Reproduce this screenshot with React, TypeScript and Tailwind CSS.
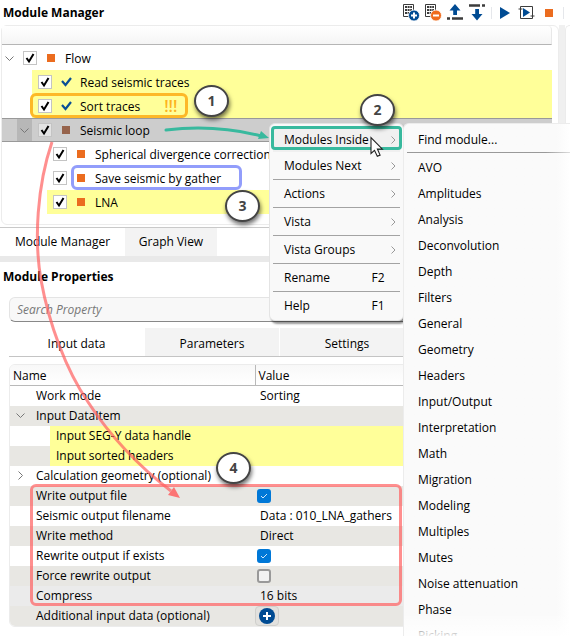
import { useState } from "react";

type TreeNode = {
  label: string;
  depth: number;
  status: "idle" | "done" | "dimmed";
  expandable?: boolean;
  highlight?: boolean;
  selected?: boolean;
  warn?: boolean;
  frame?: string;
};

const nodes: TreeNode[] = [
  { label: "Flow", depth: 0, status: "idle", expandable: true },
  { label: "Read seismic traces", depth: 1, status: "done", highlight: true },
  {
    label: "Sort traces",
    depth: 1,
    status: "done",
    highlight: true,
    warn: true,
    frame: "-left-0.5 w-[158px] border-[#fdb827]",
  },
  { label: "Seismic loop", depth: 1, status: "dimmed", expandable: true, selected: true },
  { label: "Spherical divergence correction", depth: 2, status: "idle" },
  {
    label: "Save seismic by gather",
    depth: 2,
    status: "idle",
    frame: "left-6 w-[171px] border-[#929dfb]",
  },
  { label: "LNA", depth: 2, status: "idle", highlight: true },
];

type Property = {
  name: string;
  value?: string;
  checked?: boolean;
  add?: boolean;
  toggle?: "open" | "closed";
  child?: boolean;
  shade: string;
};

const properties: Property[] = [
  { name: "Work mode", value: "Sorting", shade: "bg-white" },
  { name: "Input DataItem", toggle: "open", shade: "bg-[#e8e7e3]" },
  { name: "Input SEG-Y data handle", child: true, shade: "bg-white" },
  { name: "Input sorted headers", child: true, shade: "bg-[#e8e7e3]" },
  { name: "Calculation geometry (optional)", toggle: "closed", shade: "bg-white" },
  { name: "Write output file", checked: true, shade: "bg-[#e8e7e3]" },
  { name: "Seismic output filename", value: "Data : 010_LNA_gathers", shade: "bg-white" },
  { name: "Write method", value: "Direct", shade: "bg-[#e8e7e3]" },
  { name: "Rewrite output if exists", checked: true, shade: "bg-white" },
  { name: "Force rewrite output", checked: false, shade: "bg-[#e8e7e3]" },
  { name: "Compress", value: "16 bits", shade: "bg-[#ebebeb]" },
  { name: "Additional input data (optional)", add: true, shade: "bg-[#e8e7e3]" },
];

const menuGroups = [
  [
    { label: "Modules Inside", sub: true, active: true },
    { label: "Modules Next", sub: true },
  ],
  [{ label: "Actions", sub: true }],
  [{ label: "Vista", sub: true }],
  [{ label: "Vista Groups", sub: true }],
  [{ label: "Rename", keys: "F2" }],
  [{ label: "Help", keys: "F1" }],
] as { label: string; sub?: boolean; active?: boolean; keys?: string }[][];

const moduleCategories = [
  "AVO",
  "Amplitudes",
  "Analysis",
  "Deconvolution",
  "Depth",
  "Filters",
  "General",
  "Geometry",
  "Headers",
  "Input/Output",
  "Interpretation",
  "Math",
  "Migration",
  "Modeling",
  "Multiples",
  "Mutes",
  "Noise attenuation",
  "Phase",
  "Picking",
];

function GridIcon() {
  return (
    <g fill="none" stroke="#3c3c3c">
      <path d="M.5.5h10v12H.5z" />
      <path d="M2 3h7M2 6h7M2 9h7" strokeWidth="2" strokeDasharray="2 .600" />
    </g>
  );
}

function Chevron({ open }: { open?: boolean }) {
  return (
    <svg width="9" height="9" viewBox="0 0 9 9" fill="none" stroke="#777">
      <path d={open ? "M.5 2.5l4 4 4-4" : "M2.5.5l4 4-4 4"} />
    </svg>
  );
}

function Toolbar() {
  return (
    <div className="flex h-[22px] items-center">
      <button aria-label="Add module" className="mr-[5px]">
        <svg width="17" height="17" viewBox="0 0 17 17">
          <GridIcon />
          <circle cx="11" cy="11.500" r="5.500" fill="#004b93" stroke="#fff" strokeWidth=".8" />
          <path d="M8 11.500h6M11 8.500v6" stroke="#fff" strokeWidth="2" />
        </svg>
      </button>
      <button aria-label="Remove module" className="mr-[5px]">
        <svg width="17" height="17" viewBox="0 0 17 17">
          <GridIcon />
          <circle cx="11" cy="11.500" r="5.500" fill="#f06c1e" stroke="#fff" strokeWidth=".8" />
          <path d="M8 11.500h6" stroke="#fff" strokeWidth="2" />
        </svg>
      </button>
      <button aria-label="Move up" className="mr-[5px]">
        <svg width="17" height="17" viewBox="0 0 17 17">
          <path d="M8 0l5.500 6.500h-3.500v4.500H6.200V6.500H2.500z" fill="#004b93" />
          <path d="M0 14.500h3M5 14.500h11" stroke="#3c3c3c" strokeWidth="2.600" />
        </svg>
      </button>
      <button aria-label="Move down" className="mr-[5px]">
        <svg width="17" height="17" viewBox="0 0 17 17">
          <path d="M0 1.500h11M13 1.500h3" stroke="#3c3c3c" strokeWidth="2.600" />
          <path d="M8 16.500l5.500-6.500H10V5H6.200v5H2.500z" fill="#004b93" />
        </svg>
      </button>
      <span className="h-3 w-px bg-gray-200" />
      <button aria-label="Run" className="mx-2">
        <svg width="10" height="12" viewBox="0 0 10 12">
          <path d="M0 0l10 6-10 6z" fill="#004b93" />
        </svg>
      </button>
      <button aria-label="Run in loop" className="mr-2">
        <svg width="17" height="17" viewBox="0 0 17 17" fill="none" stroke="#3c3c3c">
          <path d="M2.500 12V2.500h12V11M2.500 5v9.500h12V6M.5 5h4M2.500 3v4M12.500 12h4M14.500 10v4" />
          <path d="M5 4l7 4.500L5 13z" fill="#004b93" stroke="none" />
        </svg>
      </button>
      <button aria-label="Stop" className="ml-0.5 h-2 w-2 bg-[#eb6c1f]" />
      <span className="ml-2.5 mr-1.5 h-3 w-px bg-gray-200" />
    </div>
  );
}

function TreeRow({ node }: { node: TreeNode }) {
  const [checked, setChecked] = useState(true);
  const square = node.status === "dimmed" ? "bg-[#96634b]" : "bg-[#eb6c1f]";
  return (
    <li
      className={`flex h-6 ${
        node.selected ? "bg-[#cdcdcd] border-y border-[#999]" : ""
      } ${node.depth === 0 ? "pl-0" : node.depth === 1 ? "pl-[15px]" : "pl-[30px]"}`}
    >
      <span
        className={`flex w-[15px] items-center justify-center ${
          node.selected ? "bg-[#b7b7b7]" : ""
        }`}
      >
        {node.expandable && <Chevron open />}
      </span>
      <div
        className={`relative flex flex-1 items-center pl-1.5 ${
          node.highlight ? "bg-[#ffff99]" : ""
        }`}
      >
        <label className="flex items-center gap-2">
          <span className="grid">
            <input
              type="checkbox"
              checked={checked}
              onChange={() => setChecked(!checked)}
              className={`col-start-1 row-start-1 h-3.5 w-3.5 appearance-none border border-[#c4c4c4] ${
                node.selected ? "bg-[#e3e3e3]" : "bg-white"
              }`}
            />
            {checked && (
              <svg
                className="pointer-events-none col-start-1 row-start-1"
                width="14"
                height="14"
                viewBox="0 0 14 14"
              >
                <path d="M3.500 7l2.500 3.500L10.500 3" fill="none" stroke="#000" strokeWidth="2" />
              </svg>
            )}
          </span>
          <span className="flex w-3 justify-center">
            {node.status === "done" ? (
              <svg width="11" height="10" viewBox="0 0 11 10">
                <path d="M1 4l3.500 4L10 1" fill="none" stroke="#0a4f96" strokeWidth="2.200" />
              </svg>
            ) : (
              <span className={`h-2 w-2 ${square}`} />
            )}
          </span>
          <span className="whitespace-nowrap pt-px">{node.label}</span>
        </label>
        {node.warn && <span className="ml-6 text-base font-semibold text-[#fdb320]">!!!</span>}
        {node.frame && (
          <span
            className={`pointer-events-none absolute -top-px h-[25px] rounded-md border-3 ${node.frame}`}
          />
        )}
      </div>
    </li>
  );
}

function PropertyRow({ row }: { row: Property }) {
  const [checked, setChecked] = useState(row.checked ?? false);
  const id = row.name.toLowerCase().replace(/[^a-z]+/g, "-");
  return (
    <tr className={`h-5 ${row.shade}`}>
      <td className="p-0">
        <div className="flex h-5 items-center">
          <span className={`flex justify-center ${row.child ? "w-10" : "w-[26px] pr-1.5"}`}>
            {row.toggle && <Chevron open={row.toggle === "open"} />}
          </span>
          <label
            htmlFor={row.checked !== undefined ? id : undefined}
            className={`flex h-5 flex-1 items-center whitespace-nowrap pt-px ${
              row.child ? "bg-[#ffff99] pl-1.5" : ""
            }`}
          >
            {row.name}
          </label>
        </div>
      </td>
      <td className={`p-0 ${row.child ? "bg-[#ffff99]" : ""}`}>
        <div className="flex h-5 items-center">
          {row.value && <span className="pl-[5px] pt-px">{row.value}</span>}
          {row.checked !== undefined && (
            <span className="ml-0.5 grid">
              <input
                id={id}
                type="checkbox"
                checked={checked}
                onChange={() => setChecked(!checked)}
                className="col-start-1 row-start-1 h-3.5 w-3.5 appearance-none rounded-[3px] border-2 border-[#999] bg-[#f2f2f2] checked:border-[#0078d7] checked:bg-[#0078d7]"
              />
              {checked && (
                <svg
                  className="pointer-events-none col-start-1 row-start-1"
                  width="14"
                  height="14"
                  viewBox="0 0 14 14"
                >
                  <path d="M4 7l2 2 4-4" fill="none" stroke="#cfe6fa" />
                </svg>
              )}
            </span>
          )}
          {row.add && (
            <button
              aria-label="Add input data"
              className="flex h-5 w-6 items-center justify-center rounded border border-[#cfcfcc] bg-[#e2e1de]"
            >
              <svg width="16" height="16" viewBox="0 0 16 16">
                <circle cx="8" cy="8" r="8" fill="#004b93" />
                <path d="M4 8h8M8 4v8" stroke="#fff" strokeWidth="2" />
              </svg>
            </button>
          )}
        </div>
      </td>
    </tr>
  );
}

function Badge({ n, place }: { n: number; place: string }) {
  return (
    <span
      className={`absolute flex h-8 w-[35px] items-center justify-center rounded-[50%] border-2 border-[#444] bg-white text-sm font-bold text-[#444] shadow-[1px_3px_4px_rgba(0,0,0,0.55)] ${place}`}
    >
      {n}
    </span>
  );
}

function ContextMenu() {
  return (
    <div
      role="menu"
      className="absolute left-[269px] top-[123px] w-[135px] rounded-md border border-[#e4e4e4] bg-[#f9f9f9] px-[3px] py-0.5 shadow-[2px_3px_2px_rgba(0,0,0,0.4)]"
    >
      {menuGroups.map((group, i) => (
        <div key={i} className={i > 0 ? "mt-px border-t border-[#a3a3a3]" : ""}>
          {group.map((item) => (
            <button
              key={item.label}
              role="menuitem"
              className={`relative flex h-[26px] w-full items-center justify-between pl-[11px] pr-1 pt-px ${
                item.active ? "bg-[#f0f0f0]" : ""
              }`}
            >
              <span className="whitespace-nowrap">{item.label}</span>
              {item.sub && (
                <svg width="5" height="8" viewBox="0 0 5 8" fill="none" stroke="#999">
                  <path d="M.5.5l3.500 3.500-3.500 3.500" />
                </svg>
              )}
              {item.keys && <span className="w-9">{item.keys}</span>}
              {item.active && (
                <span className="pointer-events-none absolute -left-0.5 -right-0.5 top-0 h-6 rounded border-3 border-[#38b99e]" />
              )}
            </button>
          ))}
        </div>
      ))}
    </div>
  );
}

function ModuleMenu() {
  return (
    <div
      role="menu"
      className="absolute bottom-0 left-[403px] right-0 top-[123px] overflow-hidden rounded-tl-md border-l border-t border-[#ececec] bg-linear-to-r from-[#fafafa] from-92% to-white pl-[3px] pt-0.5"
    >
      <button role="menuitem" className="flex h-[26px] w-full items-center pl-[11px] pt-px">
        Find module...
      </button>
      <div className="mb-px h-px bg-linear-to-r from-[#999] from-85% to-[#ddd]" />
      {moduleCategories.map((name) => (
        <button
          key={name}
          role="menuitem"
          className="flex h-[26px] w-full items-center pl-[11px] pt-px"
        >
          {name}
        </button>
      ))}
      <div className="pointer-events-none absolute inset-x-0 bottom-0 h-5 bg-linear-to-b from-white/20 to-white/90" />
    </div>
  );
}

function Arrows() {
  return (
    <svg className="pointer-events-none absolute inset-0 h-full w-full">
      <g fill="none" stroke="#ff5f5f" strokeOpacity=".7" strokeWidth="3">
        <path d="M52 142C37 186 34 240 41 280C49 324 66 370 88 402C112 439 141 468 171 491" />
      </g>
      <path d="M180 498l-12-3 6-8z" fill="#fb7474" />
      <path
        d="M166 130C200 126 234 129 261 136"
        fill="none"
        stroke="#38b99e"
        strokeWidth="3"
        strokeLinecap="round"
      />
      <path d="M269 138l-11 1 3-8z" fill="#38b99e" />
      <path
        d="M371 137.500v16l3.500-3.200 2.800 6 2.800-1.200-2.700-6h5z"
        fill="#fff"
        stroke="#222"
        strokeWidth="1.100"
      />
    </svg>
  );
}

export default function App() {
  const [search, setSearch] = useState("");
  return (
    <div className="relative min-h-screen w-full overflow-hidden bg-white font-['Open_Sans','Noto_Sans',sans-serif] text-xs text-black">
      <header className="flex h-[25px] items-center justify-between">
        <h2 className="pl-[3px] font-bold">Module Manager</h2>
        <Toolbar />
      </header>

      <div className="flex">
        <div className="min-w-0 flex-1">
          <section className="ml-px h-[200px] rounded-md border border-[#ececec] pr-1.5">
            <div className="h-[19px] rounded-tr border-b border-r border-[#b5b5b5] border-r-[#e8e8e8] bg-linear-to-b from-white to-[#f5f5f5]" />
            <ul className="pt-px">
              {nodes.map((node) => (
                <TreeRow key={node.label} node={node} />
              ))}
            </ul>
          </section>
          <div className="mt-0.5 flex h-[29px] border-t border-[#c9c9c9]">
            <button className="w-[125px]">Module Manager</button>
            <button className="w-[92px] bg-[#f3f3f3]">Graph View</button>
          </div>
          <div className="h-1.5 bg-[#e9e9e9]" />

          <h2 className="flex h-[35px] items-center pl-[3px] pb-1.5 font-bold">
            Module Properties
          </h2>
          <div className="ml-[9px] mr-2">
            <input
              aria-label="Search Property"
              placeholder="Search Property"
              value={search}
              onChange={(e) => setSearch(e.target.value)}
              className="block h-[25px] w-full rounded-md border border-[#e4e4e4] border-b-[#888] bg-[#f8f8f8] px-[7px] italic placeholder:text-[#777]"
            />
            <div className="mt-[6px] flex h-[29px] gap-px border-b border-[#c4c4c4]">
              <button className="w-[135px] pt-1">Input data</button>
              <button className="w-[134px] bg-[#f3f3f3] pt-1">Parameters</button>
              <button className="w-[134px] bg-[#f3f3f3] pt-1">Settings</button>
            </div>
            <div className="mt-[7px] overflow-hidden rounded-md border border-[#ececec]">
              <table className="w-full table-fixed border-collapse">
                <thead>
                  <tr className="h-5 bg-linear-to-b from-[#f8f8f8] to-white text-left">
                    <th className="w-[245px] border-b border-r border-[#b9b9b9] p-0 pl-[3px] pt-0.5 font-normal">
                      Name
                    </th>
                    <th className="border-b border-[#b9b9b9] p-0 pl-[3px] pt-0.5 font-normal">
                      Value
                    </th>
                  </tr>
                </thead>
                <tbody>
                  {properties.map((row) => (
                    <PropertyRow key={row.name} row={row} />
                  ))}
                </tbody>
              </table>
            </div>
          </div>
        </div>
        <div className="w-1.5 bg-[#f0f0f0]" />
        <div className="w-[5px] rounded-tl-md border-l border-t border-[#ececec]" />
      </div>

      <div className="pointer-events-none absolute left-[30px] top-[484px] h-[122px] w-[372px] rounded-md border-3 border-[#ff5f5f]/70" />
      <ContextMenu />
      <ModuleMenu />
      <Arrows />
      <Badge n={1} place="left-[194px] top-[85px]" />
      <Badge n={2} place="left-[360px] top-[94px]" />
      <Badge n={3} place="left-[225px] top-[190px]" />
      <Badge n={4} place="left-[216px] top-[452px]" />
    </div>
  );
}
